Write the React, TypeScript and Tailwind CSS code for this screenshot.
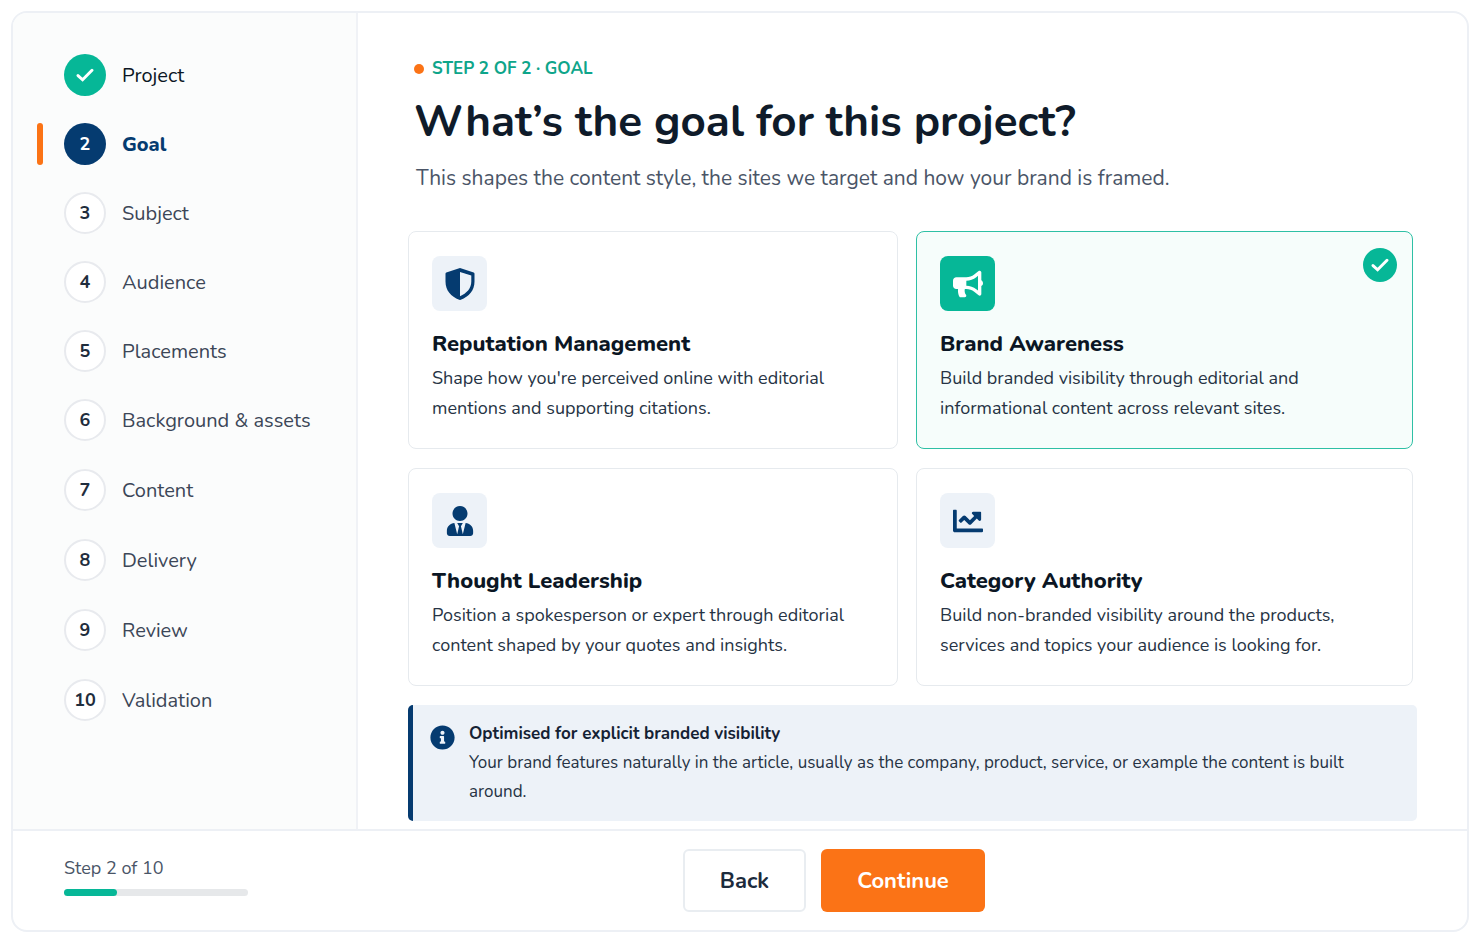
import { useState } from "react";
import type { ComponentType } from "react";
import { FaBullhorn, FaChartLine, FaInfoCircle, FaUserTie } from "react-icons/fa";

const steps = [
  "Project",
  "Goal",
  "Subject",
  "Audience",
  "Placements",
  "Background & assets",
  "Content",
  "Delivery",
  "Review",
  "Validation",
];

const current = 1;

type Goal = { title: string; text: string; icon: ComponentType<{ className?: string }> };

function HalfShield({ className }: { className?: string }) {
  return (
    <svg viewBox="1 1 27 30" className={className} fill="currentColor" fillRule="evenodd" aria-hidden="true">
      <path d="M14.5 0 28.2 4.6Q29 4.9 29 5.8V13.5C29 22.5 23.5 28.6 15.3 31.8Q14.5 32.1 13.7 31.8C5.5 28.6 0 22.5 0 13.5V5.8Q0 4.9 .8 4.6ZM14.5 4V28.2C21.2 25.2 25.8 20.6 25.8 13.5V7.6Z" />
    </svg>
  );
}

function Check() {
  return (
    <svg viewBox="0 0 18 14" className="h-[14px] w-[18px]" fill="none" aria-hidden="true">
      <path d="M2 7.6 6.6 11.8 16 2.2" stroke="currentColor" strokeWidth="2.9" strokeLinecap="round" />
    </svg>
  );
}

const goals: Goal[] = [
  {
    title: "Reputation Management",
    text: "Shape how you're perceived online with editorial mentions and supporting citations.",
    icon: HalfShield,
  },
  {
    title: "Brand Awareness",
    text: "Build branded visibility through editorial and informational content across relevant sites.",
    icon: FaBullhorn,
  },
  {
    title: "Thought Leadership",
    text: "Position a spokesperson or expert through editorial content shaped by your quotes and insights.",
    icon: FaUserTie,
  },
  {
    title: "Category Authority",
    text: "Build non-branded visibility around the products, services and topics your audience is looking for.",
    icon: FaChartLine,
  },
];

function Step({ label, index }: { label: string; index: number }) {
  const done = index < current;
  const active = index === current;
  return (
    <li className={`relative flex items-center gap-4 ${index < 5 ? "h-[69px]" : "h-[70px]"}`}>
      {active && <span className="absolute -left-[27px] h-[42px] w-[6px] rounded-full bg-[#fb7316]" />}
      <span
        className={`flex size-[42px] shrink-0 items-center justify-center rounded-full text-lg font-bold ${
          done
            ? "bg-[#06b797] text-white"
            : active
              ? "bg-[#053b70] text-white"
              : "border-2 border-[#e8eaee] bg-white text-[#1f2d3d]"
        }`}
      >
        {done ? <Check /> : index + 1}
      </span>
      <span
        className={`pt-[2px] text-[20px] ${
          done ? "text-[#0b1624]" : active ? "font-extrabold text-[#053b70]" : "text-[#3b4657]"
        }`}
      >
        {label}
      </span>
    </li>
  );
}

function GoalCard({ goal, selected, onSelect }: { goal: Goal; selected: boolean; onSelect: () => void }) {
  const Icon = goal.icon;
  return (
    <button
      type="button"
      aria-pressed={selected}
      onClick={onSelect}
      className={`relative flex flex-col items-start rounded-lg border px-[23px] pt-6 pb-[25px] text-left ${
        selected ? "border-[#2fc0a5] bg-[#f6fdfb]" : "border-[#e6eaee] bg-white"
      }`}
    >
      <span
        className={`flex size-[55px] items-center justify-center rounded-lg ${
          selected ? "bg-[#06b797] text-white" : "bg-[#edf2f8] text-[#053b70]"
        }`}
      >
        <Icon className="size-[30px] overflow-visible" />
      </span>
      <span className="mt-[17px] text-[22px] leading-[32px] font-extrabold text-[#0b1624]">{goal.title}</span>
      <span className="mt-[3px] text-[18px] leading-[30px] text-[#263344]">{goal.text}</span>
      {selected && (
        <span className="absolute top-4 right-[15px] flex size-[34px] items-center justify-center rounded-full bg-[#06b797] text-white">
          <Check />
        </span>
      )}
    </button>
  );
}

export default function App() {
  const [selected, setSelected] = useState(1);
  return (
    <div className="flex min-h-screen flex-col bg-white pt-[11px] pr-[5px] pb-[9px] pl-[11px] font-['Nunito','Lato',sans-serif]">
      <div className="flex flex-1 flex-col overflow-hidden rounded-2xl border-2 border-[#edf0f5]">
        <div className="flex flex-1">
          <aside className="w-[345px] shrink-0 border-r-2 border-[#f0f2f6] bg-[#fbfcfc] pt-[27px] pl-[51px]">
            <ol>
              {steps.map((label, i) => (
                <Step key={label} label={label} index={i} />
              ))}
            </ol>
          </aside>
          <main className="flex min-w-0 flex-1 flex-col pt-[43px] pr-[50px] pb-2 pl-[50px]">
            <header className="pl-[6px]">
              <p className="flex items-center gap-2 text-[17px] leading-[26px] font-bold text-[#0ea58a]">
                <span className="size-[10px] rounded-full bg-[#fb7316]" />
                STEP 2 OF 2 · GOAL
              </p>
              <h1 className="mt-[10px] text-[44px] leading-[60px] font-bold text-[#0f1b2a]">
                What’s the goal for this project?
              </h1>
              <p className="mt-[11px] pl-[2px] text-[21px] leading-[30px] text-[#4a5567]">
                This shapes the content style, the sites we target and how your brand is framed.
              </p>
            </header>
            <div className="mt-[38px] mr-1 grid grid-cols-[490fr_497fr] gap-x-[18px] gap-y-[19px]">
              {goals.map((goal, i) => (
                <GoalCard key={goal.title} goal={goal} selected={i === selected} onSelect={() => setSelected(i)} />
              ))}
            </div>
            <div className="mt-[19px] flex gap-[14px] rounded-[5px] border-l-[5px] border-[#053b70] bg-[#edf2f8] pt-[14px] pr-12 pb-[15px] pl-[17px] text-[17px] leading-[29px] text-[#263344]">
              <FaInfoCircle className="mt-[6px] size-[25px] shrink-0 text-[#053b70]" />
              <div>
                <h2 className="font-bold text-[#152234]">Optimised for explicit branded visibility</h2>
                <p>
                  Your brand features naturally in the article, usually as the company, product, service, or example the
                  content is built around.
                </p>
              </div>
            </div>
          </main>
        </div>
        <footer className="grid grid-cols-[619px_1fr] items-center border-t-2 border-[#edf0f5] pt-[18px] pb-[18px] pl-[51px]">
          <div className="w-[184px] pb-[11px]">
            <p className="text-[18px] leading-[28px] text-[#4a5567]">Step 2 of 10</p>
            <div className="mt-[7px] h-[7px] rounded-full bg-[#e6e8ea]">
              <div className="h-full w-[53px] rounded-full bg-[#06b797]" />
            </div>
          </div>
          <div className="flex gap-[15px]">
            <button
              type="button"
              className="h-[63px] w-[123px] rounded-md border-2 border-[#e9edf1] bg-white pt-[2px] text-[22px] font-bold text-[#1c2b3c]"
            >
              Back
            </button>
            <button
              type="button"
              className="h-[63px] w-[164px] rounded-md bg-[#fb7316] pt-[2px] text-[22px] font-bold text-white"
            >
              Continue
            </button>
          </div>
        </footer>
      </div>
    </div>
  );
}
